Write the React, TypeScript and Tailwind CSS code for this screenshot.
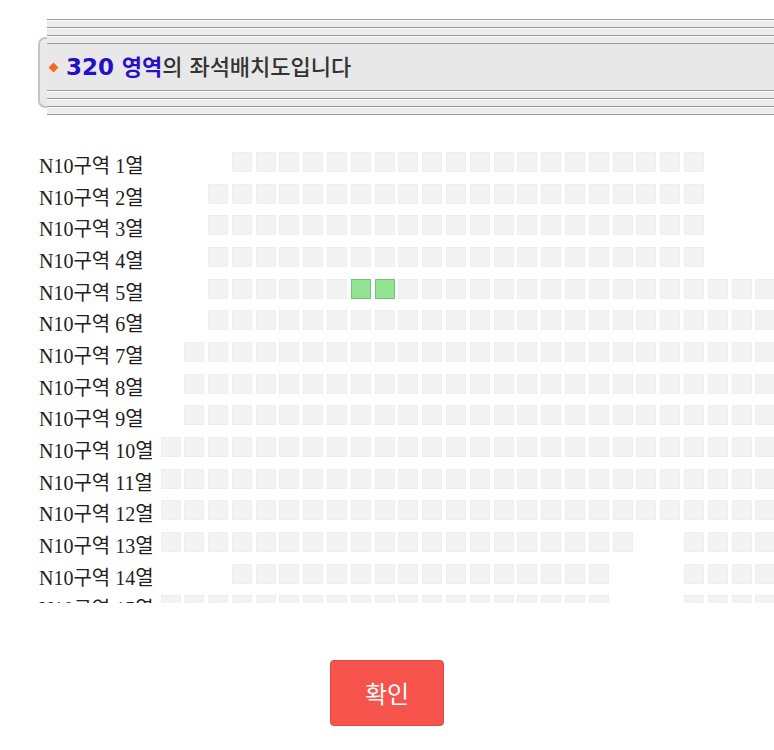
import React from "react";

type Row = { label: string; spans: [number, number][]; green?: number[] };

const ROWS: Row[] = [
  { label: "N10구역 1열", spans: [[3, 22]] },
  { label: "N10구역 2열", spans: [[2, 22]] },
  { label: "N10구역 3열", spans: [[2, 22]] },
  { label: "N10구역 4열", spans: [[2, 22]] },
  { label: "N10구역 5열", spans: [[2, 26]], green: [8, 9] },
  { label: "N10구역 6열", spans: [[2, 26]] },
  { label: "N10구역 7열", spans: [[1, 26]] },
  { label: "N10구역 8열", spans: [[1, 26]] },
  { label: "N10구역 9열", spans: [[1, 26]] },
  { label: "N10구역 10열", spans: [[0, 26]] },
  { label: "N10구역 11열", spans: [[0, 26]] },
  { label: "N10구역 12열", spans: [[0, 26]] },
  { label: "N10구역 13열", spans: [[0, 19], [22, 26]] },
  { label: "N10구역 14열", spans: [[3, 18], [22, 26]] },
  { label: "N10구역 15열", spans: [[0, 18], [22, 26]] },
];

const COLS = 27;

function Stripe({ top }: { top?: boolean }) {
  return top ? (
    <div className="flex flex-col">
      {[0, 1, 2].map((i) => (
        <div key={i} className="flex flex-col">
          <div className="h-px bg-[#9c9c9c]" />
          <div className="h-px bg-[#fbfbfb]" />
          <div className="h-[6px] bg-[#ececec]" />
        </div>
      ))}
      <div className="h-px bg-[#9c9c9c]" />
    </div>
  ) : (
    <div className="flex flex-col">
      <div className="h-px bg-[#9c9c9c]" />
      {[0, 1, 2].map((i) => (
        <div key={i} className="flex flex-col">
          <div className="h-px bg-[#fbfbfb]" />
          <div className="h-[6px] bg-[#ececec]" />
          <div className="h-px bg-[#9c9c9c]" />
        </div>
      ))}
    </div>
  );
}

function SeatRow({ row }: { row: Row }) {
  const cells = [];
  for (let c = 0; c < COLS; c++) {
    const on = row.spans.some(([a, b]) => c >= a && c <= b);
    const green = row.green?.includes(c);
    cells.push(
      <div
        key={c}
        className={
          "h-[20px] w-[20px] shrink-0 " +
          (!on ? "" : green ? "border border-[#72c472] bg-[#92e492]" : "border border-[#eeeeee] bg-[#f3f3f3]")
        }
      />
    );
  }
  return <div className="flex gap-[3.8px]">{cells}</div>;
}

export default function App() {
  return (
    <div className="w-full overflow-hidden bg-white" style={{ height: 750 }}>
      <div className="flex pl-[38px] pt-[19px]">
        <div className="w-[9px] shrink-0 pt-[18px]">
          <div className="h-[71px] rounded-l-[7px] border-y-2 border-l-2 border-[#c4c4c4] bg-[#e9e9e9]" />
        </div>
        <div className="flex flex-1 flex-col">
          <Stripe top />
          <div className="flex h-[46px] items-center bg-[#e8e8e8] pl-[3px]">
            <span className="mr-[9px] inline-block h-[7px] w-[7px] rotate-45 bg-[#f26a1b]" />
            <span
              className="text-[22px] text-[#333333]"
              style={{ fontFamily: '"DejaVu Sans", "Noto Sans CJK KR", sans-serif' }}
            >
              <b className="text-[23px] font-bold text-[#2410c8]">320</b>
              <b className="font-bold text-[#2410c8]"> 영역</b>
              <span className="font-medium">의 좌석배치도입니다</span>
            </span>
          </div>
          <Stripe />
        </div>
      </div>

      <div className="mt-[31px] h-[457px] overflow-hidden">
        {ROWS.map((r) => (
          <div key={r.label} className="flex h-[31.7px] items-center">
            <div
              className="w-[160.5px] shrink-0 whitespace-nowrap pl-[39px] pt-[8px] text-[20px] leading-none text-[#222]"
              style={{ fontFamily: '"Liberation Serif", "Noto Sans CJK KR", serif' }}
            >
              {r.label}
            </div>
            <SeatRow row={r} />
          </div>
        ))}
      </div>

      <div className="mt-[57px] flex justify-center">
        <button
          className="h-[66px] w-[114px] rounded-[4px] border border-[#e5463e] bg-[#f5534b] text-[24px] text-white"
          style={{ fontFamily: '"Noto Sans CJK KR", sans-serif' }}
        >
          확인
        </button>
      </div>
    </div>
  );
}
